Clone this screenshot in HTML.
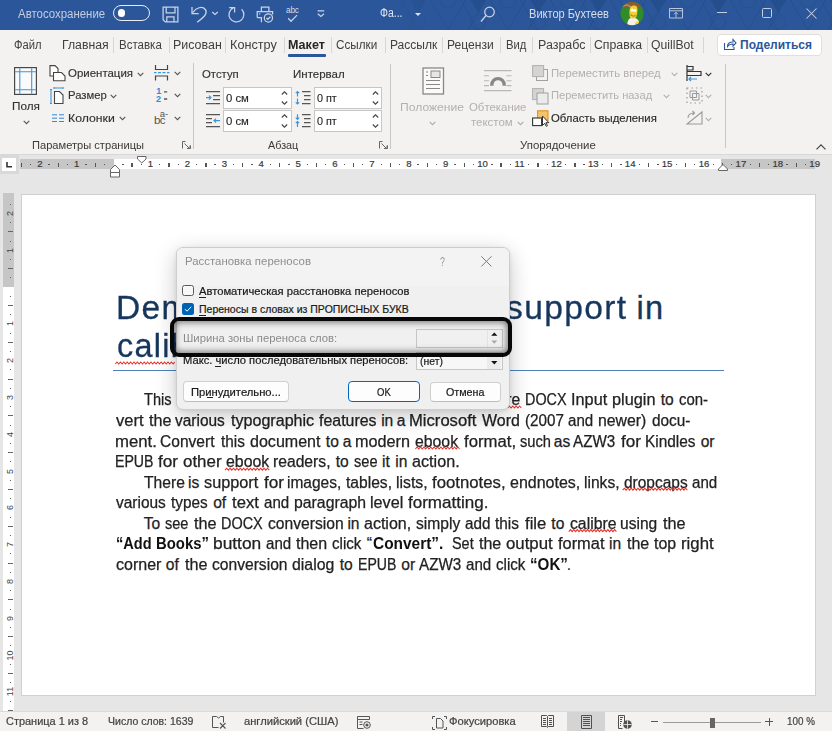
<!DOCTYPE html><html><head><meta charset="utf-8"><style>*{margin:0;padding:0;box-sizing:border-box}
html,body{width:832px;height:731px;overflow:hidden;background:#e6e6e6;position:relative;font-family:"Liberation Sans",sans-serif}
.t{position:absolute;white-space:pre;line-height:1;transform-origin:0 0}
.a{position:absolute}
svg{position:absolute;overflow:visible}
</style></head><body>
<div class="a" style="left:0;top:0;width:832px;height:30px;background:#2b579a"></div>
<div class="a" style="left:0;top:30px;width:832px;height:123.5px;background:#f3f2f1"></div>
<div class="a" style="left:0;top:153.5px;width:832px;height:1.5px;background:#d8d8d8"></div>
<div class="a" style="left:22px;top:195px;width:793px;height:500px;background:#fff;box-shadow:0 0 0 1px #d0d0d0"></div>
<div class="a" style="left:0;top:711px;width:832px;height:20px;background:#f3f2f1;border-top:1px solid #dadada"></div>
<svg style="left:0;top:0" width="832" height="30"><defs><linearGradient id="fg" x1="0" x2="1"><stop offset="0" stop-color="#fff" stop-opacity="0"/><stop offset="0.45" stop-color="#fff" stop-opacity="0"/><stop offset="0.55" stop-color="#fff" stop-opacity="1"/></linearGradient><mask id="fm"><rect width="832" height="30" fill="url(#fg)"/></mask><pattern id="hx" width="60" height="34" patternUnits="userSpaceOnUse" x="8" y="-4"><path d="M0 0L20 34M40 0L20 34M30 0L50 34M60 0L40 34" stroke="#1f4a86" stroke-opacity="0.55" stroke-width="1" fill="none"/><path d="M40 0L60 0L50 17z" fill="#1f4580" fill-opacity="0.45"/><circle cx="20" cy="4" r="8" stroke="#1f4a86" stroke-opacity="0.5" fill="none"/><circle cx="50" cy="26" r="7.5" stroke="#1f4a86" stroke-opacity="0.45" fill="none"/></pattern></defs><rect x="0" y="0" width="832" height="30" fill="url(#hx)" mask="url(#fm)"/></svg>
<div class="t" style="left:18.30px;top:7.54px;font-size:12px;color:#c2cde0;font-weight:400;transform:scaleX(0.9531);">Автосохранение</div>
<div class="a" style="left:113px;top:5px;width:37px;height:15.5px;border:1.5px solid #e8ecf4;border-radius:8px"></div>
<div class="a" style="left:117.8px;top:9.2px;width:7.4px;height:7.4px;border-radius:50%;background:#fff"></div>
<svg style="left:162px;top:6px" width="17" height="17"><path stroke="#c9d3e6" stroke-width="1.25" fill="none" d="M1.1 1.2H15.9V15.9H3.3L1.1 13.7Z M4.2 1.2V6.8H13V1.2 M4.8 15.9V10.8H12V15.9"/></svg>
<svg style="left:185px;top:2px" width="65" height="25"><path stroke="#c9d3e6" stroke-width="1.25" fill="none" d="M7 5.1v6.6h6.7 M8 10.5C11 5.5 17.5 3.8 20.3 7.5 22.5 10.5 21 13.8 12.1 20.2"/><path stroke="#c9d3e6" stroke-width="1.25" fill="none" d="M27.2 10l2.8 2.5 2.8-2.5"/><path stroke="#c9d3e6" stroke-width="1.25" fill="none" d="M56.6 7.3A7.4 7.4 0 1 1 48.2 5.9 M44.2 5.5h5.4v5"/></svg>
<svg style="left:252px;top:2px" width="24" height="25"><path stroke="#c9d3e6" stroke-width="1.25" fill="none" d="M9.4 9.5V5.2h7.5v4.3 M5.2 15.5V9.6h15.4v3 M5.2 15.5h4.2v4.8 M7 11.8h1.2"/><circle stroke="#c9d3e6" stroke-width="1.25" fill="none" cx="16.4" cy="15.9" r="4.1"/><path stroke="#c9d3e6" stroke-width="1.25" fill="none" d="M14.4 15.9l1.4 1.4 2.6-2.6"/></svg>
<div class="t" style="left:286px;top:6.4px;font-size:8.3px;color:#d3dbea;letter-spacing:-0.2px">abc</div>
<svg style="left:286px;top:14px" width="14" height="9"><path stroke="#c9d3e6" stroke-width="1.25" fill="none" d="M2.2 4.3l2.8 3 6-6.2"/></svg>
<svg style="left:317px;top:9px" width="9" height="9"><path stroke="#c9d3e6" stroke-width="1.25" fill="none" d="M.6 1.9h6.6 M.8 4.8l3.1 2.6 3.1-2.6"/></svg>
<div class="t" style="left:379.50px;top:7.14px;font-size:12px;color:#dfe5f0;font-weight:400;transform:scaleX(0.8718);">Фа...</div>
<svg style="left:414.5px;top:13px" width="6" height="3"><path fill="#dfe5f0" d="M0 0h6l-3 3z"/></svg>
<svg style="left:480px;top:6px" width="16" height="17"><circle stroke="#c9d3e6" stroke-width="1.25" fill="none" cx="9.5" cy="6" r="4.8"/><path stroke="#c9d3e6" stroke-width="1.25" fill="none" d="M6 9.5l-5 6"/></svg>
<div class="t" style="left:528.70px;top:8.44px;font-size:12px;color:#d6deec;font-weight:400;transform:scaleX(0.9221);">Виктор Бухтеев</div>
<svg style="left:619.5px;top:2px" width="24" height="24"><defs><clipPath id="av"><circle cx="12" cy="11.6" r="11.6"/></clipPath></defs><g clip-path="url(#av)"><rect width="24" height="24" fill="#2f8c27"/><rect width="24" height="5.6" fill="#8c5b2e"/><path d="M3 4.5C6 2 9 3 11 5.5" stroke="#c98a5a" stroke-width="1.5" fill="none"/><path d="M7.5 24C7 20 8 16.5 12 15.5c4 0 6 2 7 4v4.5z" fill="#f4f2ea"/><path d="M10 15.5C9 12 9.2 6 11 4.5c2-1.5 5-1 6 .5.8 2 .5 7-1 10.5-1.5 1.5-4.5 1.5-6 0z" fill="#f2cf36"/><circle cx="12.2" cy="8.2" r="1.6" fill="#fff"/><circle cx="15" cy="8.6" r="1.4" fill="#fff"/><path d="M10.5 12.5c1.2 1.5 3.5 2 5 1" stroke="#9a7a2a" stroke-width="1.1" fill="none"/><path d="M15 21.5c1-1.5 2.5-2.5 4-2v3.5z" fill="#f2cf36"/></g></svg>
<svg style="left:669px;top:8px" width="15" height="11"><path stroke="#b9c5dc" stroke-width="1" fill="none" d="M.5 .5h13v9.5h-13z M.5 2.8h13 M7 9.5v-5.2 M5 6.3l2-2 2 2"/></svg>
<div class="a" style="left:716.5px;top:12px;width:10.5px;height:1px;background:#c3cde2"></div>
<div class="a" style="left:762px;top:8.3px;width:9.5px;height:9.5px;border:1px solid #c3cde2;border-radius:1.5px"></div>
<svg style="left:806px;top:8px" width="11" height="11"><path stroke="#c3cde2" stroke-width="1.05" d="M.5 .5l10 10 M10.5 .5l-10 10"/></svg>
<div class="t" style="left:13.50px;top:39.44px;font-size:12px;color:#404040;font-weight:400;transform:scaleX(0.9322);">Файл</div>
<div class="t" style="left:61.60px;top:39.44px;font-size:12px;color:#404040;font-weight:400;transform:scaleX(1.0205);">Главная</div>
<div class="t" style="left:118.50px;top:39.44px;font-size:12px;color:#404040;font-weight:400;transform:scaleX(0.9593);">Вставка</div>
<div class="t" style="left:173.40px;top:39.44px;font-size:12px;color:#404040;font-weight:400;transform:scaleX(1.0360);">Рисован</div>
<div class="t" style="left:230.00px;top:39.44px;font-size:12px;color:#404040;font-weight:400;transform:scaleX(1.0558);">Констру</div>
<div class="t" style="left:335.50px;top:39.44px;font-size:12px;color:#404040;font-weight:400;transform:scaleX(0.9749);">Ссылки</div>
<div class="t" style="left:390.00px;top:39.44px;font-size:12px;color:#404040;font-weight:400;transform:scaleX(1.0020);">Рассылк</div>
<div class="t" style="left:447.00px;top:39.44px;font-size:12px;color:#404040;font-weight:400;transform:scaleX(1.0068);">Рецензи</div>
<div class="t" style="left:505.60px;top:39.44px;font-size:12px;color:#404040;font-weight:400;transform:scaleX(0.9398);">Вид</div>
<div class="t" style="left:538.00px;top:39.44px;font-size:12px;color:#404040;font-weight:400;transform:scaleX(1.0387);">Разрабс</div>
<div class="t" style="left:594.00px;top:39.44px;font-size:12px;color:#404040;font-weight:400;transform:scaleX(1.0232);">Справка</div>
<div class="t" style="left:651.00px;top:39.44px;font-size:12px;color:#404040;font-weight:400;transform:scaleX(1.0168);">QuillBot</div>
<div class="t" style="left:288.00px;top:39.44px;font-size:12px;color:#262626;font-weight:700;transform:scaleX(1.0470);">Макет</div>
<div class="a" style="left:287.5px;top:54.3px;width:38.3px;height:2.4px;background:#2b579a;border-radius:1px"></div>
<div class="a" style="left:113.3px;top:37px;width:1px;height:16px;background:#d6d6d6"></div>
<div class="a" style="left:168.5px;top:37px;width:1px;height:16px;background:#d6d6d6"></div>
<div class="a" style="left:225.1px;top:37px;width:1px;height:16px;background:#d6d6d6"></div>
<div class="a" style="left:283.5px;top:37px;width:1px;height:16px;background:#d6d6d6"></div>
<div class="a" style="left:330.5px;top:37px;width:1px;height:16px;background:#d6d6d6"></div>
<div class="a" style="left:385.2px;top:37px;width:1px;height:16px;background:#d6d6d6"></div>
<div class="a" style="left:442.0px;top:37px;width:1px;height:16px;background:#d6d6d6"></div>
<div class="a" style="left:499.5px;top:37px;width:1px;height:16px;background:#d6d6d6"></div>
<div class="a" style="left:531.5px;top:37px;width:1px;height:16px;background:#d6d6d6"></div>
<div class="a" style="left:589.5px;top:37px;width:1px;height:16px;background:#d6d6d6"></div>
<div class="a" style="left:646.5px;top:37px;width:1px;height:16px;background:#d6d6d6"></div>
<div class="a" style="left:703.0px;top:37px;width:1px;height:16px;background:#d6d6d6"></div>
<div class="a" style="left:717px;top:33.5px;width:105px;height:22.5px;background:#fff;border:1px solid #e1dfdd;border-radius:4px"></div>
<svg style="left:723px;top:37px" width="14" height="14"><path stroke="#2b579a" stroke-width="1.1" fill="none" d="M1.5 6v6.5h9.5v-2.5 M4.5 9.5c0-3 2-4.5 5.5-4.5v-2.5l3 3.5-3 3.2v-2.2c-2.5 0-4.3 .8-5.5 2.5z"/></svg>
<div class="t" style="left:740.00px;top:39.14px;font-size:12px;color:#2b579a;font-weight:700;">Поделиться</div>
<svg style="left:13px;top:66px" width="26" height="30"><rect x="1.6" y="1.6" width="21.8" height="26.8" fill="#fafafa" stroke="#484848" stroke-width="1.2"/><path stroke="#3a96dd" stroke-width="1.1" d="M6.8 2.2v25.6 M18.7 2.2v25.6 M2.2 5.7h20.6 M2.2 23.7h20.6"/></svg>
<div class="t" style="left:12.00px;top:100.97px;font-size:11.5px;color:#333231;font-weight:400;transform:scaleX(1.0214);-webkit-text-stroke:0.15px #333">Поля</div>
<svg style="left:22.5px;top:119.8px" width="7" height="5"><path stroke="#555" stroke-width="1.1" fill="none" d="M.7 .8l2.8 2.8 2.8-2.8"/></svg>
<svg style="left:49px;top:65px" width="18" height="17"><path stroke="#444" stroke-width="1.1" fill="#fff" d="M1 .6h5l3 3v7.4h-8z"/><path stroke="#444" stroke-width="1.1" fill="#fff" d="M4.5 7.5h8l3.5 3.5v4.8h-11.5z"/></svg>
<div class="t" style="left:68.40px;top:68.07px;font-size:11.5px;color:#333231;font-weight:400;transform:scaleX(0.9961);-webkit-text-stroke:0.15px #333">Ориентация</div>
<svg style="left:136.5px;top:71.5px" width="7" height="5"><path stroke="#555" stroke-width="1.1" fill="none" d="M.7 .8l2.8 2.8 2.8-2.8"/></svg>
<svg style="left:49.5px;top:86.5px" width="15" height="18"><path stroke="#3a96dd" stroke-width="1.1" fill="none" d="M1 2.5v14 M0 2.5h2 M0 16.5h2 M4 1h9 M4 0v2 M13 0v2"/><path stroke="#444" stroke-width="1.1" fill="#fff" d="M4.5 4.5h5l3.5 3.5v8.5h-8.5z"/></svg>
<div class="t" style="left:68.40px;top:89.97px;font-size:11.5px;color:#333231;font-weight:400;transform:scaleX(0.9813);-webkit-text-stroke:0.15px #333">Размер</div>
<svg style="left:110.3px;top:93.8px" width="7" height="5"><path stroke="#555" stroke-width="1.1" fill="none" d="M.7 .8l2.8 2.8 2.8-2.8"/></svg>
<svg style="left:51.5px;top:113.5px" width="13" height="8"><path stroke="#2f8ad8" stroke-width="1" d="M0 .8h5 M7 .8h5 M0 4.2h5 M7 4.2h5 M0 7.5h5 M7 7.5h5"/></svg>
<div class="t" style="left:68.40px;top:112.57px;font-size:11.5px;color:#333231;font-weight:400;transform:scaleX(1.0654);-webkit-text-stroke:0.15px #333">Колонки</div>
<svg style="left:118.5px;top:115.8px" width="7" height="5"><path stroke="#555" stroke-width="1.1" fill="none" d="M.7 .8l2.8 2.8 2.8-2.8"/></svg>
<svg style="left:153.5px;top:64.5px" width="16" height="16"><path stroke="#444" stroke-width="1.2" fill="none" d="M1.5 0v4.5h12v-4.5 M1.5 15.5v-4.5h12v4.5"/><path stroke="#3a96dd" stroke-width="1.2" d="M0 7.7h2.5 M4 7.7h3 M8.5 7.7h3 M13 7.7h2.5"/></svg>
<svg style="left:173.5px;top:70.8px" width="7" height="5"><path stroke="#555" stroke-width="1.1" fill="none" d="M.7 .8l2.8 2.8 2.8-2.8"/></svg>
<div class="t" style="left:156.3px;top:87.2px;font-size:9px;color:#2f8ad8;font-weight:700">1</div>
<div class="t" style="left:156px;top:95px;font-size:9px;color:#2f8ad8;font-weight:700">2</div>
<svg style="left:163.5px;top:90.5px" width="5" height="9"><path stroke="#555" stroke-width="1.3" d="M0 .8h3.2 M0 8h3.2"/></svg>
<svg style="left:173.5px;top:93.3px" width="7" height="5"><path stroke="#555" stroke-width="1.1" fill="none" d="M.7 .8l2.8 2.8 2.8-2.8"/></svg>
<div class="t" style="left:159.8px;top:109px;font-size:9.5px;color:#555">a-</div>
<div class="t" style="left:154px;top:114.6px;font-size:11.5px;color:#555;letter-spacing:-0.6px">bc</div>
<svg style="left:173.5px;top:115.8px" width="7" height="5"><path stroke="#555" stroke-width="1.1" fill="none" d="M.7 .8l2.8 2.8 2.8-2.8"/></svg>
<div class="t" style="left:31.70px;top:139.69px;font-size:11px;color:#3b3a39;font-weight:400;transform:scaleX(1.0100);">Параметры страницы</div>
<svg style="left:182px;top:141px" width="9" height="8"><path stroke="#666" stroke-width="1" fill="none" d="M.5 7.5v-7h3 M8.5 4.5v3h-3 M2.5 2.5l5 5 M5 7.5h3v-3"/></svg>
<div class="a" style="left:193.3px;top:63px;width:1px;height:86px;background:#c8c6c4"></div>
<div class="t" style="left:202.00px;top:69.07px;font-size:11.5px;color:#333231;font-weight:400;transform:scaleX(0.9870);-webkit-text-stroke:0.15px #333">Отступ</div>
<div class="t" style="left:292.50px;top:69.07px;font-size:11.5px;color:#333231;font-weight:400;transform:scaleX(1.0015);-webkit-text-stroke:0.15px #333">Интервал</div>
<div class="a" style="left:223.3px;top:87px;width:68.6px;height:21.8px;background:#fff;border:1px solid #c8c6c4"></div>
<div class="a" style="left:314px;top:87px;width:68.4px;height:21.8px;background:#fff;border:1px solid #c8c6c4"></div>
<svg style="left:281px;top:91px" width="7" height="14"><path stroke="#444" stroke-width="1.1" fill="none" d="M.8 3.5l2.7-2.7 2.7 2.7 M.8 10.5l2.7 2.7 2.7-2.7"/></svg>
<svg style="left:371.5px;top:91px" width="7" height="14"><path stroke="#444" stroke-width="1.1" fill="none" d="M.8 3.5l2.7-2.7 2.7 2.7 M.8 10.5l2.7 2.7 2.7-2.7"/></svg>
<div class="a" style="left:223.3px;top:110.3px;width:68.6px;height:21.8px;background:#fff;border:1px solid #c8c6c4"></div>
<div class="a" style="left:314px;top:110.3px;width:68.4px;height:21.8px;background:#fff;border:1px solid #c8c6c4"></div>
<svg style="left:281px;top:114.3px" width="7" height="14"><path stroke="#444" stroke-width="1.1" fill="none" d="M.8 3.5l2.7-2.7 2.7 2.7 M.8 10.5l2.7 2.7 2.7-2.7"/></svg>
<svg style="left:371.5px;top:114.3px" width="7" height="14"><path stroke="#444" stroke-width="1.1" fill="none" d="M.8 3.5l2.7-2.7 2.7 2.7 M.8 10.5l2.7 2.7 2.7-2.7"/></svg>
<div class="t" style="left:226.00px;top:92.77px;font-size:11.5px;color:#262626;font-weight:400;transform:scaleX(0.9854);-webkit-text-stroke:0.15px #333">0 см</div>
<div class="t" style="left:226.00px;top:116.07px;font-size:11.5px;color:#262626;font-weight:400;transform:scaleX(0.9854);-webkit-text-stroke:0.15px #333">0 см</div>
<div class="t" style="left:316.50px;top:92.77px;font-size:11.5px;color:#262626;font-weight:400;transform:scaleX(0.9396);-webkit-text-stroke:0.15px #333">0 пт</div>
<div class="t" style="left:316.50px;top:116.07px;font-size:11.5px;color:#262626;font-weight:400;transform:scaleX(0.9396);-webkit-text-stroke:0.15px #333">0 пт</div>
<svg style="left:205.5px;top:90.5px" width="15" height="14"><path stroke="#555" stroke-width="1.1" d="M0 .6h14 M7 4.6h7 M7 8.6h7 M0 12.6h14"/><path stroke="#3a96dd" stroke-width="1.2" fill="none" d="M0 6.6h5 M3 4.6l2 2-2 2"/></svg>
<svg style="left:205.5px;top:113.8px" width="15" height="14"><path stroke="#555" stroke-width="1.1" d="M0 .6h14 M0 4.6h6 M0 8.6h6 M0 12.6h14"/><path stroke="#3a96dd" stroke-width="1.2" fill="none" d="M14 6.6h-6 M10 4.6l-2 2 2 2"/></svg>
<svg style="left:294.5px;top:90.5px" width="17" height="14"><path stroke="#3a96dd" stroke-width="1.2" fill="none" d="M2.5 .5v5 M.8 2.2l1.7-1.7 1.7 1.7 M2.5 7.5v5.5 M.8 11.3l1.7 1.7 1.7-1.7"/><path stroke="#555" stroke-width="1.1" d="M7 .6h8.5 M9 4.6h6.5 M9 8.6h6.5 M7 12.6h8.5"/></svg>
<svg style="left:294.5px;top:113.8px" width="17" height="14"><path stroke="#3a96dd" stroke-width="1.2" fill="none" d="M2.5 .3v5 M.8 3.6l1.7 1.7 1.7-1.7 M2.5 7.5v5.5 M.8 9.2l1.7-1.7 1.7 1.7"/><path stroke="#555" stroke-width="1.1" d="M7 .6h8.5 M9 4.6h6.5 M9 8.6h6.5 M7 12.6h8.5"/></svg>
<div class="t" style="left:268.00px;top:139.69px;font-size:11px;color:#3b3a39;font-weight:400;transform:scaleX(0.9824);">Абзац</div>
<svg style="left:379px;top:141px" width="9" height="8"><path stroke="#666" stroke-width="1" fill="none" d="M.5 7.5v-7h3 M8.5 4.5v3h-3 M2.5 2.5l5 5 M5 7.5h3v-3"/></svg>
<div class="a" style="left:390px;top:63.5px;width:1px;height:85px;background:#c8c6c4"></div>
<svg style="left:421.5px;top:66.8px" width="23" height="28"><rect x="1" y="1" width="20.5" height="26" fill="#fafafa" stroke="#8a8886" stroke-width="1.3"/><rect x="9" y="4" width="9" height="6.5" fill="#e6e6e6" stroke="#8a8886" stroke-width="1"/><path stroke="#8a8886" stroke-width="1" d="M4 5h2 M4 8.5h2 M4 13.5h14 M4 17.5h14 M4 21.5h14"/></svg>
<div class="t" style="left:400.40px;top:101.87px;font-size:11.5px;color:#b3b0ad;font-weight:400;transform:scaleX(1.0534);">Положение</div>
<svg style="left:429px;top:121.3px" width="7" height="5"><path stroke="#aaa" stroke-width="1.1" fill="none" d="M.7 .8l2.8 2.8 2.8-2.8"/></svg>
<svg style="left:484px;top:69.5px" width="28" height="22"><path stroke="#b8b8b8" stroke-width="1.1" d="M0 .6h27.5 M0 5.8h5 M22.5 5.8h5 M0 10.8h5 M22.5 10.8h5 M0 15.6h5 M22.5 15.6h5 M0 20.6h27.5"/><path stroke="#8a8886" stroke-width="3.4" fill="none" d="M7.8 15.8v-1a6.2 6.2 0 0 1 12.4 0v1"/></svg>
<div class="t" style="left:469.00px;top:101.87px;font-size:11.5px;color:#b3b0ad;font-weight:400;transform:scaleX(0.9910);">Обтекание</div>
<div class="t" style="left:471.00px;top:117.07px;font-size:11.5px;color:#b3b0ad;font-weight:400;transform:scaleX(0.9958);">текстом</div>
<svg style="left:516.5px;top:121.3px" width="7" height="5"><path stroke="#aaa" stroke-width="1.1" fill="none" d="M.7 .8l2.8 2.8 2.8-2.8"/></svg>
<svg style="left:531.5px;top:64.5px" width="17" height="17"><rect x="4.5" y="4.5" width="11" height="11" fill="#f3f2f1" stroke="#a0a0a0" stroke-width="1"/><rect x="0.6" y="0.6" width="11" height="11" fill="#d4d4d4" stroke="#b0b0b0" stroke-width="1"/></svg>
<svg style="left:531.5px;top:87.5px" width="17" height="17"><rect x="0.6" y="0.6" width="11" height="11" fill="#d4d4d4" stroke="#b0b0b0" stroke-width="1"/><rect x="5" y="5" width="11" height="11" fill="#ebebeb" stroke="#a0a0a0" stroke-width="1"/></svg>
<div class="t" style="left:550.60px;top:68.17px;font-size:11.5px;color:#b3b0ad;font-weight:400;transform:scaleX(0.9819);">Переместить вперед</div>
<div class="t" style="left:550.60px;top:90.27px;font-size:11.5px;color:#b3b0ad;font-weight:400;transform:scaleX(0.9663);">Переместить назад</div>
<svg style="left:670.5px;top:71.5px" width="7" height="5"><path stroke="#b0b0b0" stroke-width="1.1" fill="none" d="M.7 .8l2.8 2.8 2.8-2.8"/></svg>
<svg style="left:663px;top:94px" width="7" height="5"><path stroke="#b0b0b0" stroke-width="1.1" fill="none" d="M.7 .8l2.8 2.8 2.8-2.8"/></svg>
<svg style="left:531.5px;top:109.5px" width="17" height="17"><rect x="5.6" y="0.8" width="10.4" height="9.4" fill="#f6c36a" stroke="#e3901f" stroke-width="1.1"/><rect x="0.6" y="8" width="9" height="7.6" fill="#fff" stroke="#333" stroke-width="1.1"/><path fill="#fff" stroke="#333" stroke-width="1" d="M10.5 6v9.5l2.2-2.2 1.6 3 1.2-.6-1.6-3h3z"/></svg>
<div class="t" style="left:550.60px;top:113.07px;font-size:11.5px;color:#262626;font-weight:400;transform:scaleX(0.9841);-webkit-text-stroke:0.15px #333">Область выделения</div>
<div class="t" style="left:519.60px;top:139.59px;font-size:11px;color:#3b3a39;font-weight:400;transform:scaleX(1.0387);">Упорядочение</div>
<svg style="left:685.5px;top:64.5px" width="17" height="17"><path stroke="#333" stroke-width="1.2" fill="none" d="M1 0v16 M1 1.5h6v3.5h-6 M1 6.5h14v4h-14"/><path stroke="#3a96dd" stroke-width="1.2" fill="none" d="M3 14h8 M5 12l-2 2 2 2"/></svg>
<svg style="left:705.3px;top:71.5px" width="7" height="5"><path stroke="#333" stroke-width="1.1" fill="none" d="M.7 .8l2.8 2.8 2.8-2.8"/></svg>
<svg style="left:685.5px;top:87px" width="17" height="17"><path stroke="#9a9a9a" stroke-width="1" fill="none" d="M4 4h6.5v6.5h-6.5z M6.5 6.5h6.5v6.5h-6.5z"/><path stroke="#9a9a9a" stroke-width="1.2" stroke-dasharray="1.5 3" fill="none" d="M1 1h15v15h-15z"/></svg>
<svg style="left:705.3px;top:94px" width="7" height="5"><path stroke="#b0b0b0" stroke-width="1.1" fill="none" d="M.7 .8l2.8 2.8 2.8-2.8"/></svg>
<svg style="left:685.5px;top:110px" width="17" height="15"><path stroke="#9a9a9a" stroke-width="1.1" fill="none" d="M1 14h15v-12z M2 8c0-3 2-5 6-5 M6.5 1l2 2-2 2"/></svg>
<svg style="left:705.3px;top:116.5px" width="7" height="5"><path stroke="#b0b0b0" stroke-width="1.1" fill="none" d="M.7 .8l2.8 2.8 2.8-2.8"/></svg>
<div class="a" style="left:725px;top:63.5px;width:1px;height:84px;background:#c8c6c4"></div>
<svg style="left:815.5px;top:144px" width="10" height="6"><path stroke="#444" stroke-width="1.2" fill="none" d="M.5 5.3l4.5-4.5 4.5 4.5"/></svg>
<div class="a" style="left:0;top:154.5px;width:19px;height:19px;background:#d9d9d9"></div>
<div class="a" style="left:1.5px;top:157.5px;width:14.5px;height:13.5px;background:#fff"></div>
<svg style="left:6px;top:162px" width="7" height="6"><path stroke="#333" stroke-width="1.6" fill="none" d="M1 0v4.8h5"/></svg>
<div class="a" style="left:20px;top:159px;width:795px;height:9.8px;background:#c6c6c6"></div>
<div class="a" style="left:113.5px;top:159px;width:607.5px;height:9.8px;background:#fff"></div>
<div class="a" style="left:20.75px;top:162.6px;width:1.3px;height:4.6px;background:#555"></div>
<div class="a" style="left:29.98px;top:163.9px;width:1.3px;height:1.3px;background:#555"></div>
<div class="t" style="left:29.80px;top:159.3px;width:20px;text-align:center;font-size:9.6px;color:#3a3a3a;-webkit-text-stroke:0.2px #3a3a3a">2</div>
<div class="a" style="left:48.42px;top:163.9px;width:1.3px;height:1.3px;background:#555"></div>
<div class="a" style="left:57.65px;top:162.6px;width:1.3px;height:4.6px;background:#555"></div>
<div class="a" style="left:66.88px;top:163.9px;width:1.3px;height:1.3px;background:#555"></div>
<div class="t" style="left:66.70px;top:159.3px;width:20px;text-align:center;font-size:9.6px;color:#3a3a3a;-webkit-text-stroke:0.2px #3a3a3a">1</div>
<div class="a" style="left:85.33px;top:163.9px;width:1.3px;height:1.3px;background:#555"></div>
<div class="a" style="left:94.55px;top:162.6px;width:1.3px;height:4.6px;background:#555"></div>
<div class="a" style="left:103.78px;top:163.9px;width:1.3px;height:1.3px;background:#555"></div>
<div class="a" style="left:122.22px;top:163.9px;width:1.3px;height:1.3px;background:#555"></div>
<div class="a" style="left:131.45px;top:162.6px;width:1.3px;height:4.6px;background:#555"></div>
<div class="a" style="left:140.67px;top:163.9px;width:1.3px;height:1.3px;background:#555"></div>
<div class="t" style="left:140.50px;top:159.3px;width:20px;text-align:center;font-size:9.6px;color:#3a3a3a;-webkit-text-stroke:0.2px #3a3a3a">1</div>
<div class="a" style="left:159.12px;top:163.9px;width:1.3px;height:1.3px;background:#555"></div>
<div class="a" style="left:168.35px;top:162.6px;width:1.3px;height:4.6px;background:#555"></div>
<div class="a" style="left:177.58px;top:163.9px;width:1.3px;height:1.3px;background:#555"></div>
<div class="t" style="left:177.40px;top:159.3px;width:20px;text-align:center;font-size:9.6px;color:#3a3a3a;-webkit-text-stroke:0.2px #3a3a3a">2</div>
<div class="a" style="left:196.03px;top:163.9px;width:1.3px;height:1.3px;background:#555"></div>
<div class="a" style="left:205.25px;top:162.6px;width:1.3px;height:4.6px;background:#555"></div>
<div class="a" style="left:214.47px;top:163.9px;width:1.3px;height:1.3px;background:#555"></div>
<div class="t" style="left:214.30px;top:159.3px;width:20px;text-align:center;font-size:9.6px;color:#3a3a3a;-webkit-text-stroke:0.2px #3a3a3a">3</div>
<div class="a" style="left:232.92px;top:163.9px;width:1.3px;height:1.3px;background:#555"></div>
<div class="a" style="left:242.15px;top:162.6px;width:1.3px;height:4.6px;background:#555"></div>
<div class="a" style="left:251.38px;top:163.9px;width:1.3px;height:1.3px;background:#555"></div>
<div class="t" style="left:251.20px;top:159.3px;width:20px;text-align:center;font-size:9.6px;color:#3a3a3a;-webkit-text-stroke:0.2px #3a3a3a">4</div>
<div class="a" style="left:269.82px;top:163.9px;width:1.3px;height:1.3px;background:#555"></div>
<div class="a" style="left:279.05px;top:162.6px;width:1.3px;height:4.6px;background:#555"></div>
<div class="a" style="left:288.27px;top:163.9px;width:1.3px;height:1.3px;background:#555"></div>
<div class="t" style="left:288.10px;top:159.3px;width:20px;text-align:center;font-size:9.6px;color:#3a3a3a;-webkit-text-stroke:0.2px #3a3a3a">5</div>
<div class="a" style="left:306.72px;top:163.9px;width:1.3px;height:1.3px;background:#555"></div>
<div class="a" style="left:315.95px;top:162.6px;width:1.3px;height:4.6px;background:#555"></div>
<div class="a" style="left:325.17px;top:163.9px;width:1.3px;height:1.3px;background:#555"></div>
<div class="t" style="left:325.00px;top:159.3px;width:20px;text-align:center;font-size:9.6px;color:#3a3a3a;-webkit-text-stroke:0.2px #3a3a3a">6</div>
<div class="a" style="left:343.62px;top:163.9px;width:1.3px;height:1.3px;background:#555"></div>
<div class="a" style="left:352.85px;top:162.6px;width:1.3px;height:4.6px;background:#555"></div>
<div class="a" style="left:362.07px;top:163.9px;width:1.3px;height:1.3px;background:#555"></div>
<div class="t" style="left:361.90px;top:159.3px;width:20px;text-align:center;font-size:9.6px;color:#3a3a3a;-webkit-text-stroke:0.2px #3a3a3a">7</div>
<div class="a" style="left:380.52px;top:163.9px;width:1.3px;height:1.3px;background:#555"></div>
<div class="a" style="left:389.75px;top:162.6px;width:1.3px;height:4.6px;background:#555"></div>
<div class="a" style="left:398.97px;top:163.9px;width:1.3px;height:1.3px;background:#555"></div>
<div class="t" style="left:398.80px;top:159.3px;width:20px;text-align:center;font-size:9.6px;color:#3a3a3a;-webkit-text-stroke:0.2px #3a3a3a">8</div>
<div class="a" style="left:417.42px;top:163.9px;width:1.3px;height:1.3px;background:#555"></div>
<div class="a" style="left:426.65px;top:162.6px;width:1.3px;height:4.6px;background:#555"></div>
<div class="a" style="left:435.88px;top:163.9px;width:1.3px;height:1.3px;background:#555"></div>
<div class="t" style="left:435.70px;top:159.3px;width:20px;text-align:center;font-size:9.6px;color:#3a3a3a;-webkit-text-stroke:0.2px #3a3a3a">9</div>
<div class="a" style="left:454.32px;top:163.9px;width:1.3px;height:1.3px;background:#555"></div>
<div class="a" style="left:463.55px;top:162.6px;width:1.3px;height:4.6px;background:#555"></div>
<div class="a" style="left:472.77px;top:163.9px;width:1.3px;height:1.3px;background:#555"></div>
<div class="t" style="left:472.60px;top:159.3px;width:20px;text-align:center;font-size:9.6px;color:#3a3a3a;-webkit-text-stroke:0.2px #3a3a3a">10</div>
<div class="a" style="left:491.22px;top:163.9px;width:1.3px;height:1.3px;background:#555"></div>
<div class="a" style="left:500.45px;top:162.6px;width:1.3px;height:4.6px;background:#555"></div>
<div class="a" style="left:509.67px;top:163.9px;width:1.3px;height:1.3px;background:#555"></div>
<div class="t" style="left:509.50px;top:159.3px;width:20px;text-align:center;font-size:9.6px;color:#3a3a3a;-webkit-text-stroke:0.2px #3a3a3a">11</div>
<div class="a" style="left:528.12px;top:163.9px;width:1.3px;height:1.3px;background:#555"></div>
<div class="a" style="left:537.35px;top:162.6px;width:1.3px;height:4.6px;background:#555"></div>
<div class="a" style="left:546.57px;top:163.9px;width:1.3px;height:1.3px;background:#555"></div>
<div class="t" style="left:546.40px;top:159.3px;width:20px;text-align:center;font-size:9.6px;color:#3a3a3a;-webkit-text-stroke:0.2px #3a3a3a">12</div>
<div class="a" style="left:565.02px;top:163.9px;width:1.3px;height:1.3px;background:#555"></div>
<div class="a" style="left:574.25px;top:162.6px;width:1.3px;height:4.6px;background:#555"></div>
<div class="a" style="left:583.47px;top:163.9px;width:1.3px;height:1.3px;background:#555"></div>
<div class="t" style="left:583.30px;top:159.3px;width:20px;text-align:center;font-size:9.6px;color:#3a3a3a;-webkit-text-stroke:0.2px #3a3a3a">13</div>
<div class="a" style="left:601.92px;top:163.9px;width:1.3px;height:1.3px;background:#555"></div>
<div class="a" style="left:611.15px;top:162.6px;width:1.3px;height:4.6px;background:#555"></div>
<div class="a" style="left:620.38px;top:163.9px;width:1.3px;height:1.3px;background:#555"></div>
<div class="t" style="left:620.20px;top:159.3px;width:20px;text-align:center;font-size:9.6px;color:#3a3a3a;-webkit-text-stroke:0.2px #3a3a3a">14</div>
<div class="a" style="left:638.82px;top:163.9px;width:1.3px;height:1.3px;background:#555"></div>
<div class="a" style="left:648.05px;top:162.6px;width:1.3px;height:4.6px;background:#555"></div>
<div class="a" style="left:657.27px;top:163.9px;width:1.3px;height:1.3px;background:#555"></div>
<div class="t" style="left:657.10px;top:159.3px;width:20px;text-align:center;font-size:9.6px;color:#3a3a3a;-webkit-text-stroke:0.2px #3a3a3a">15</div>
<div class="a" style="left:675.73px;top:163.9px;width:1.3px;height:1.3px;background:#555"></div>
<div class="a" style="left:684.95px;top:162.6px;width:1.3px;height:4.6px;background:#555"></div>
<div class="a" style="left:694.17px;top:163.9px;width:1.3px;height:1.3px;background:#555"></div>
<div class="t" style="left:694.00px;top:159.3px;width:20px;text-align:center;font-size:9.6px;color:#3a3a3a;-webkit-text-stroke:0.2px #3a3a3a">16</div>
<div class="a" style="left:712.62px;top:163.9px;width:1.3px;height:1.3px;background:#555"></div>
<div class="a" style="left:721.85px;top:162.6px;width:1.3px;height:4.6px;background:#555"></div>
<div class="a" style="left:731.07px;top:163.9px;width:1.3px;height:1.3px;background:#555"></div>
<div class="t" style="left:730.90px;top:159.3px;width:20px;text-align:center;font-size:9.6px;color:#3a3a3a;-webkit-text-stroke:0.2px #3a3a3a">17</div>
<div class="a" style="left:749.52px;top:163.9px;width:1.3px;height:1.3px;background:#555"></div>
<div class="a" style="left:758.75px;top:162.6px;width:1.3px;height:4.6px;background:#555"></div>
<div class="a" style="left:767.98px;top:163.9px;width:1.3px;height:1.3px;background:#555"></div>
<div class="t" style="left:767.80px;top:159.3px;width:20px;text-align:center;font-size:9.6px;color:#3a3a3a;-webkit-text-stroke:0.2px #3a3a3a">18</div>
<div class="a" style="left:786.42px;top:163.9px;width:1.3px;height:1.3px;background:#555"></div>
<div class="a" style="left:795.65px;top:162.6px;width:1.3px;height:4.6px;background:#555"></div>
<div class="a" style="left:804.88px;top:163.9px;width:1.3px;height:1.3px;background:#555"></div>
<div class="t" style="left:804.70px;top:159.3px;width:20px;text-align:center;font-size:9.6px;color:#3a3a3a;-webkit-text-stroke:0.2px #3a3a3a">19</div>
<svg style="left:110px;top:163.5px" width="10" height="14"><path fill="#fff" stroke="#666" stroke-width="1" d="M.5 5.5l4.5-4.5 4.5 4.5v3h-9z M.5 8.5h9v4.5h-9z"/></svg>
<svg style="left:137.3px;top:156.2px" width="10" height="8"><path fill="#fff" stroke="#666" stroke-width="1" d="M.5 .5h8.5v2.5l-4.25 4-4.25-4z"/></svg>
<svg style="left:717.5px;top:163.5px" width="10" height="8"><path fill="#fff" stroke="#666" stroke-width="1" d="M.5 6.5v-1.5l4.5-4.5 4.5 4.5v1.5z"/></svg>
<div class="a" style="left:3px;top:193px;width:11px;height:518px;background:#fff"></div>
<div class="a" style="left:3px;top:193px;width:11px;height:94px;background:#c6c6c6"></div>
<div class="a" style="left:9.9px;top:203.70px;width:1.1px;height:1.1px;background:#666"></div>
<div class="t" style="left:-0.5px;top:208.90px;width:20px;height:9px;text-align:center;font-size:9px;color:#444;transform:rotate(-90deg);transform-origin:50% 50%">2</div>
<div class="a" style="left:9.9px;top:222.10px;width:1.1px;height:1.1px;background:#666"></div>
<div class="a" style="left:8.2px;top:231.30px;width:4.5px;height:1px;background:#666"></div>
<div class="a" style="left:9.9px;top:240.50px;width:1.1px;height:1.1px;background:#666"></div>
<div class="t" style="left:-0.5px;top:245.70px;width:20px;height:9px;text-align:center;font-size:9px;color:#444;transform:rotate(-90deg);transform-origin:50% 50%">1</div>
<div class="a" style="left:9.9px;top:258.90px;width:1.1px;height:1.1px;background:#666"></div>
<div class="a" style="left:8.2px;top:268.10px;width:4.5px;height:1px;background:#666"></div>
<div class="a" style="left:9.9px;top:277.30px;width:1.1px;height:1.1px;background:#666"></div>
<div class="a" style="left:9.9px;top:295.70px;width:1.1px;height:1.1px;background:#666"></div>
<div class="a" style="left:8.2px;top:304.90px;width:4.5px;height:1px;background:#666"></div>
<div class="a" style="left:9.9px;top:314.10px;width:1.1px;height:1.1px;background:#666"></div>
<div class="t" style="left:-0.5px;top:319.30px;width:20px;height:9px;text-align:center;font-size:9px;color:#444;transform:rotate(-90deg);transform-origin:50% 50%">1</div>
<div class="a" style="left:9.9px;top:332.50px;width:1.1px;height:1.1px;background:#666"></div>
<div class="a" style="left:8.2px;top:341.70px;width:4.5px;height:1px;background:#666"></div>
<div class="a" style="left:9.9px;top:350.90px;width:1.1px;height:1.1px;background:#666"></div>
<div class="t" style="left:-0.5px;top:356.10px;width:20px;height:9px;text-align:center;font-size:9px;color:#444;transform:rotate(-90deg);transform-origin:50% 50%">2</div>
<div class="a" style="left:9.9px;top:369.30px;width:1.1px;height:1.1px;background:#666"></div>
<div class="a" style="left:8.2px;top:378.50px;width:4.5px;height:1px;background:#666"></div>
<div class="a" style="left:9.9px;top:387.70px;width:1.1px;height:1.1px;background:#666"></div>
<div class="t" style="left:-0.5px;top:392.90px;width:20px;height:9px;text-align:center;font-size:9px;color:#444;transform:rotate(-90deg);transform-origin:50% 50%">3</div>
<div class="a" style="left:9.9px;top:406.10px;width:1.1px;height:1.1px;background:#666"></div>
<div class="a" style="left:8.2px;top:415.30px;width:4.5px;height:1px;background:#666"></div>
<div class="a" style="left:9.9px;top:424.50px;width:1.1px;height:1.1px;background:#666"></div>
<div class="t" style="left:-0.5px;top:429.70px;width:20px;height:9px;text-align:center;font-size:9px;color:#444;transform:rotate(-90deg);transform-origin:50% 50%">4</div>
<div class="a" style="left:9.9px;top:442.90px;width:1.1px;height:1.1px;background:#666"></div>
<div class="a" style="left:8.2px;top:452.10px;width:4.5px;height:1px;background:#666"></div>
<div class="a" style="left:9.9px;top:461.30px;width:1.1px;height:1.1px;background:#666"></div>
<div class="t" style="left:-0.5px;top:466.50px;width:20px;height:9px;text-align:center;font-size:9px;color:#444;transform:rotate(-90deg);transform-origin:50% 50%">5</div>
<div class="a" style="left:9.9px;top:479.70px;width:1.1px;height:1.1px;background:#666"></div>
<div class="a" style="left:8.2px;top:488.90px;width:4.5px;height:1px;background:#666"></div>
<div class="a" style="left:9.9px;top:498.10px;width:1.1px;height:1.1px;background:#666"></div>
<div class="t" style="left:-0.5px;top:503.30px;width:20px;height:9px;text-align:center;font-size:9px;color:#444;transform:rotate(-90deg);transform-origin:50% 50%">6</div>
<div class="a" style="left:9.9px;top:516.50px;width:1.1px;height:1.1px;background:#666"></div>
<div class="a" style="left:8.2px;top:525.70px;width:4.5px;height:1px;background:#666"></div>
<div class="a" style="left:9.9px;top:534.90px;width:1.1px;height:1.1px;background:#666"></div>
<div class="t" style="left:-0.5px;top:540.10px;width:20px;height:9px;text-align:center;font-size:9px;color:#444;transform:rotate(-90deg);transform-origin:50% 50%">7</div>
<div class="a" style="left:9.9px;top:553.30px;width:1.1px;height:1.1px;background:#666"></div>
<div class="a" style="left:8.2px;top:562.50px;width:4.5px;height:1px;background:#666"></div>
<div class="a" style="left:9.9px;top:571.70px;width:1.1px;height:1.1px;background:#666"></div>
<div class="t" style="left:-0.5px;top:576.90px;width:20px;height:9px;text-align:center;font-size:9px;color:#444;transform:rotate(-90deg);transform-origin:50% 50%">8</div>
<div class="a" style="left:9.9px;top:590.10px;width:1.1px;height:1.1px;background:#666"></div>
<div class="a" style="left:8.2px;top:599.30px;width:4.5px;height:1px;background:#666"></div>
<div class="a" style="left:9.9px;top:608.50px;width:1.1px;height:1.1px;background:#666"></div>
<div class="t" style="left:-0.5px;top:613.70px;width:20px;height:9px;text-align:center;font-size:9px;color:#444;transform:rotate(-90deg);transform-origin:50% 50%">9</div>
<div class="a" style="left:9.9px;top:626.90px;width:1.1px;height:1.1px;background:#666"></div>
<div class="a" style="left:8.2px;top:636.10px;width:4.5px;height:1px;background:#666"></div>
<div class="a" style="left:9.9px;top:645.30px;width:1.1px;height:1.1px;background:#666"></div>
<div class="t" style="left:-0.5px;top:650.50px;width:20px;height:9px;text-align:center;font-size:9px;color:#444;transform:rotate(-90deg);transform-origin:50% 50%">10</div>
<div class="a" style="left:9.9px;top:663.70px;width:1.1px;height:1.1px;background:#666"></div>
<div class="a" style="left:8.2px;top:672.90px;width:4.5px;height:1px;background:#666"></div>
<div class="a" style="left:9.9px;top:682.10px;width:1.1px;height:1.1px;background:#666"></div>
<div class="t" style="left:-0.5px;top:687.30px;width:20px;height:9px;text-align:center;font-size:9px;color:#444;transform:rotate(-90deg);transform-origin:50% 50%">11</div>
<div class="a" style="left:9.9px;top:700.50px;width:1.1px;height:1.1px;background:#666"></div>
<div class="a" style="left:8.2px;top:709.70px;width:4.5px;height:1px;background:#666"></div>
<div class="t" style="left:115.94px;top:291.70px;font-size:32.6px;color:#17365d;font-weight:400;transform:scaleX(1.0285);letter-spacing:1.30px;-webkit-text-stroke:0.3px #17365d">Demonstration</div>
<div class="t" style="left:362.06px;top:291.70px;font-size:32.6px;color:#17365d;font-weight:400;letter-spacing:1.30px;-webkit-text-stroke:0.3px #17365d">of</div>
<div class="t" style="left:403.40px;top:291.70px;font-size:32.6px;color:#17365d;font-weight:400;transform:scaleX(0.9160);letter-spacing:1.30px;-webkit-text-stroke:0.3px #17365d">DOCX</div>
<div class="t" style="left:505.70px;top:291.70px;font-size:32.6px;color:#17365d;font-weight:400;transform:scaleX(1.0308);letter-spacing:1.30px;-webkit-text-stroke:0.3px #17365d">support</div>
<div class="t" style="left:636.58px;top:291.70px;font-size:32.6px;color:#17365d;font-weight:400;letter-spacing:1.30px;-webkit-text-stroke:0.3px #17365d">in</div>
<div class="t" style="left:117.01px;top:330.00px;font-size:32.6px;color:#17365d;font-weight:400;transform:scaleX(0.9937);letter-spacing:1.30px;-webkit-text-stroke:0.3px #17365d">calibre</div>
<div class="a" style="left:113.2px;top:370px;width:611px;height:1px;background:#4f81bd"></div>
<div class="t" style="left:144.40px;top:392.39px;font-size:15.6px;color:#222;font-weight:400;transform:scaleX(0.9323);-webkit-text-stroke:0.25px #222">This</div>
<div class="t" style="left:176.97px;top:392.39px;font-size:15.6px;color:#222;font-weight:400;transform:scaleX(1.0276);-webkit-text-stroke:0.25px #222">document</div>
<div class="t" style="left:252.62px;top:392.39px;font-size:15.6px;color:#222;font-weight:400;transform:scaleX(1.0237);-webkit-text-stroke:0.25px #222">demonstrates</div>
<div class="t" style="left:354.93px;top:392.39px;font-size:15.6px;color:#222;font-weight:400;transform:scaleX(1.0353);-webkit-text-stroke:0.25px #222">the</div>
<div class="t" style="left:381.72px;top:392.39px;font-size:15.6px;color:#222;font-weight:400;transform:scaleX(1.0474);-webkit-text-stroke:0.25px #222">ability</div>
<div class="t" style="left:428.69px;top:392.39px;font-size:15.6px;color:#222;font-weight:400;-webkit-text-stroke:0.25px #222">of</div>
<div class="t" style="left:447.51px;top:392.39px;font-size:15.6px;color:#222;font-weight:400;transform:scaleX(1.0353);-webkit-text-stroke:0.25px #222">the</div>
<div class="t" style="left:474.46px;top:392.39px;font-size:15.6px;color:#222;font-weight:400;transform:scaleX(1.0046);-webkit-text-stroke:0.25px #222">calibre</div>
<div class="t" style="left:524.68px;top:392.39px;font-size:15.6px;color:#222;font-weight:400;transform:scaleX(0.9216);-webkit-text-stroke:0.25px #222">DOCX</div>
<div class="t" style="left:570.97px;top:392.39px;font-size:15.6px;color:#222;font-weight:400;transform:scaleX(1.0443);-webkit-text-stroke:0.25px #222">Input</div>
<div class="t" style="left:611.91px;top:392.39px;font-size:15.6px;color:#222;font-weight:400;transform:scaleX(1.0448);-webkit-text-stroke:0.25px #222">plugin</div>
<div class="t" style="left:660.68px;top:392.39px;font-size:15.6px;color:#222;font-weight:400;-webkit-text-stroke:0.25px #222">to</div>
<div class="t" style="left:679.12px;top:392.39px;font-size:15.6px;color:#222;font-weight:400;transform:scaleX(0.9582);-webkit-text-stroke:0.25px #222">con-</div>
<div class="t" style="left:115.60px;top:412.96px;font-size:15.6px;color:#222;font-weight:400;transform:scaleX(1.0574);-webkit-text-stroke:0.25px #222">vert</div>
<div class="t" style="left:148.87px;top:412.96px;font-size:15.6px;color:#222;font-weight:400;transform:scaleX(1.0395);-webkit-text-stroke:0.25px #222">the</div>
<div class="t" style="left:175.30px;top:412.96px;font-size:15.6px;color:#222;font-weight:400;transform:scaleX(0.9906);-webkit-text-stroke:0.25px #222">various</div>
<div class="t" style="left:230.71px;top:412.96px;font-size:15.6px;color:#222;font-weight:400;transform:scaleX(1.0311);-webkit-text-stroke:0.25px #222">typographic</div>
<div class="t" style="left:319.15px;top:412.96px;font-size:15.6px;color:#222;font-weight:400;transform:scaleX(1.0211);-webkit-text-stroke:0.25px #222">features</div>
<div class="t" style="left:381.15px;top:412.96px;font-size:15.6px;color:#222;font-weight:400;-webkit-text-stroke:0.25px #222">in</div>
<div class="t" style="left:396.79px;top:412.96px;font-size:15.6px;color:#222;font-weight:400;-webkit-text-stroke:0.25px #222">a</div>
<div class="t" style="left:409.26px;top:412.96px;font-size:15.6px;color:#222;font-weight:400;transform:scaleX(1.0657);-webkit-text-stroke:0.25px #222">Microsoft</div>
<div class="t" style="left:481.67px;top:412.96px;font-size:15.6px;color:#222;font-weight:400;transform:scaleX(1.0226);-webkit-text-stroke:0.25px #222">Word</div>
<div class="t" style="left:524.85px;top:412.96px;font-size:15.6px;color:#222;font-weight:400;transform:scaleX(0.9765);-webkit-text-stroke:0.25px #222">(2007</div>
<div class="t" style="left:568.39px;top:412.96px;font-size:15.6px;color:#222;font-weight:400;transform:scaleX(0.9680);-webkit-text-stroke:0.25px #222">and</div>
<div class="t" style="left:597.97px;top:412.96px;font-size:15.6px;color:#222;font-weight:400;transform:scaleX(1.0147);-webkit-text-stroke:0.25px #222">newer)</div>
<div class="t" style="left:651.73px;top:412.96px;font-size:15.6px;color:#222;font-weight:400;transform:scaleX(0.9861);-webkit-text-stroke:0.25px #222">docu-</div>
<div class="t" style="left:114.53px;top:433.53px;font-size:15.6px;color:#222;font-weight:400;transform:scaleX(1.0735);-webkit-text-stroke:0.25px #222">ment.</div>
<div class="t" style="left:160.39px;top:433.53px;font-size:15.6px;color:#222;font-weight:400;transform:scaleX(0.9975);-webkit-text-stroke:0.25px #222">Convert</div>
<div class="t" style="left:220.59px;top:433.53px;font-size:15.6px;color:#222;font-weight:400;transform:scaleX(0.9821);-webkit-text-stroke:0.25px #222">this</div>
<div class="t" style="left:249.55px;top:433.53px;font-size:15.6px;color:#222;font-weight:400;transform:scaleX(1.0292);-webkit-text-stroke:0.25px #222">document</div>
<div class="t" style="left:325.82px;top:433.53px;font-size:15.6px;color:#222;font-weight:400;-webkit-text-stroke:0.25px #222">to</div>
<div class="t" style="left:342.77px;top:433.53px;font-size:15.6px;color:#222;font-weight:400;-webkit-text-stroke:0.25px #222">a</div>
<div class="t" style="left:355.40px;top:433.53px;font-size:15.6px;color:#222;font-weight:400;transform:scaleX(1.0402);-webkit-text-stroke:0.25px #222">modern</div>
<div class="t" style="left:415.21px;top:433.53px;font-size:15.6px;color:#222;font-weight:400;transform:scaleX(1.0127);-webkit-text-stroke:0.25px #222">ebook</div>
<div class="t" style="left:463.54px;top:433.53px;font-size:15.6px;color:#222;font-weight:400;transform:scaleX(1.0725);-webkit-text-stroke:0.25px #222">format,</div>
<div class="t" style="left:519.59px;top:433.53px;font-size:15.6px;color:#222;font-weight:400;transform:scaleX(0.9414);-webkit-text-stroke:0.25px #222">such</div>
<div class="t" style="left:553.85px;top:433.53px;font-size:15.6px;color:#222;font-weight:400;-webkit-text-stroke:0.25px #222">as</div>
<div class="t" style="left:573.36px;top:433.53px;font-size:15.6px;color:#222;font-weight:400;transform:scaleX(0.9736);-webkit-text-stroke:0.25px #222">AZW3</div>
<div class="t" style="left:620.91px;top:433.53px;font-size:15.6px;color:#222;font-weight:400;transform:scaleX(1.0970);-webkit-text-stroke:0.25px #222">for</div>
<div class="t" style="left:644.68px;top:433.53px;font-size:15.6px;color:#222;font-weight:400;transform:scaleX(0.9884);-webkit-text-stroke:0.25px #222">Kindles</div>
<div class="t" style="left:700.64px;top:433.53px;font-size:15.6px;color:#222;font-weight:400;-webkit-text-stroke:0.25px #222">or</div>
<div class="t" style="left:114.69px;top:454.10px;font-size:15.6px;color:#222;font-weight:400;transform:scaleX(0.9068);-webkit-text-stroke:0.25px #222">EPUB</div>
<div class="t" style="left:158.44px;top:454.10px;font-size:15.6px;color:#222;font-weight:400;transform:scaleX(1.1035);-webkit-text-stroke:0.25px #222">for</div>
<div class="t" style="left:182.87px;top:454.10px;font-size:15.6px;color:#222;font-weight:400;transform:scaleX(1.0843);-webkit-text-stroke:0.25px #222">other</div>
<div class="t" style="left:225.76px;top:454.10px;font-size:15.6px;color:#222;font-weight:400;transform:scaleX(1.0187);-webkit-text-stroke:0.25px #222">ebook</div>
<div class="t" style="left:273.37px;top:454.10px;font-size:15.6px;color:#222;font-weight:400;transform:scaleX(1.0052);-webkit-text-stroke:0.25px #222">readers,</div>
<div class="t" style="left:335.70px;top:454.10px;font-size:15.6px;color:#222;font-weight:400;-webkit-text-stroke:0.25px #222">to</div>
<div class="t" style="left:354.07px;top:454.10px;font-size:15.6px;color:#222;font-weight:400;transform:scaleX(0.9356);-webkit-text-stroke:0.25px #222">see</div>
<div class="t" style="left:382.09px;top:454.10px;font-size:15.6px;color:#222;font-weight:400;-webkit-text-stroke:0.25px #222">it</div>
<div class="t" style="left:395.23px;top:454.10px;font-size:15.6px;color:#222;font-weight:400;-webkit-text-stroke:0.25px #222">in</div>
<div class="t" style="left:412.26px;top:454.10px;font-size:15.6px;color:#222;font-weight:400;transform:scaleX(1.0366);-webkit-text-stroke:0.25px #222">action.</div>
<div class="t" style="left:144.00px;top:474.67px;font-size:15.6px;color:#222;font-weight:400;transform:scaleX(1.0039);-webkit-text-stroke:0.25px #222">There</div>
<div class="t" style="left:187.97px;top:474.67px;font-size:15.6px;color:#222;font-weight:400;-webkit-text-stroke:0.25px #222">is</div>
<div class="t" style="left:203.59px;top:474.67px;font-size:15.6px;color:#222;font-weight:400;transform:scaleX(1.0428);-webkit-text-stroke:0.25px #222">support</div>
<div class="t" style="left:263.62px;top:474.67px;font-size:15.6px;color:#222;font-weight:400;transform:scaleX(1.1007);-webkit-text-stroke:0.25px #222">for</div>
<div class="t" style="left:287.14px;top:474.67px;font-size:15.6px;color:#222;font-weight:400;transform:scaleX(0.9942);-webkit-text-stroke:0.25px #222">images,</div>
<div class="t" style="left:346.19px;top:474.67px;font-size:15.6px;color:#222;font-weight:400;transform:scaleX(1.0010);-webkit-text-stroke:0.25px #222">tables,</div>
<div class="t" style="left:395.91px;top:474.67px;font-size:15.6px;color:#222;font-weight:400;transform:scaleX(1.0157);-webkit-text-stroke:0.25px #222">lists,</div>
<div class="t" style="left:432.31px;top:474.67px;font-size:15.6px;color:#222;font-weight:400;transform:scaleX(1.0736);-webkit-text-stroke:0.25px #222">footnotes,</div>
<div class="t" style="left:510.01px;top:474.67px;font-size:15.6px;color:#222;font-weight:400;transform:scaleX(1.0253);-webkit-text-stroke:0.25px #222">endnotes,</div>
<div class="t" style="left:583.96px;top:474.67px;font-size:15.6px;color:#222;font-weight:400;transform:scaleX(1.0013);-webkit-text-stroke:0.25px #222">links,</div>
<div class="t" style="left:623.80px;top:474.67px;font-size:15.6px;color:#222;font-weight:400;transform:scaleX(0.9923);-webkit-text-stroke:0.25px #222">dropcaps</div>
<div class="t" style="left:692.45px;top:474.67px;font-size:15.6px;color:#222;font-weight:400;transform:scaleX(0.9688);-webkit-text-stroke:0.25px #222">and</div>
<div class="t" style="left:115.60px;top:495.24px;font-size:15.6px;color:#222;font-weight:400;transform:scaleX(0.9905);-webkit-text-stroke:0.25px #222">various</div>
<div class="t" style="left:171.00px;top:495.24px;font-size:15.6px;color:#222;font-weight:400;transform:scaleX(0.9821);-webkit-text-stroke:0.25px #222">types</div>
<div class="t" style="left:213.20px;top:495.24px;font-size:15.6px;color:#222;font-weight:400;-webkit-text-stroke:0.25px #222">of</div>
<div class="t" style="left:232.06px;top:495.24px;font-size:15.6px;color:#222;font-weight:400;transform:scaleX(1.0687);-webkit-text-stroke:0.25px #222">text</div>
<div class="t" style="left:264.09px;top:495.24px;font-size:15.6px;color:#222;font-weight:400;transform:scaleX(0.9678);-webkit-text-stroke:0.25px #222">and</div>
<div class="t" style="left:293.66px;top:495.24px;font-size:15.6px;color:#222;font-weight:400;transform:scaleX(1.0141);-webkit-text-stroke:0.25px #222">paragraph</div>
<div class="t" style="left:370.03px;top:495.24px;font-size:15.6px;color:#222;font-weight:400;transform:scaleX(1.0370);-webkit-text-stroke:0.25px #222">level</div>
<div class="t" style="left:408.03px;top:495.24px;font-size:15.6px;color:#222;font-weight:400;transform:scaleX(1.0917);-webkit-text-stroke:0.25px #222">formatting.</div>
<div class="t" style="left:143.80px;top:515.81px;font-size:15.6px;color:#222;font-weight:400;-webkit-text-stroke:0.25px #222">To</div>
<div class="t" style="left:165.35px;top:515.81px;font-size:15.6px;color:#222;font-weight:400;transform:scaleX(0.9332);-webkit-text-stroke:0.25px #222">see</div>
<div class="t" style="left:193.89px;top:515.81px;font-size:15.6px;color:#222;font-weight:400;transform:scaleX(1.0405);-webkit-text-stroke:0.25px #222">the</div>
<div class="t" style="left:220.52px;top:515.81px;font-size:15.6px;color:#222;font-weight:400;transform:scaleX(0.9263);-webkit-text-stroke:0.25px #222">DOCX</div>
<div class="t" style="left:267.62px;top:515.81px;font-size:15.6px;color:#222;font-weight:400;transform:scaleX(1.0026);-webkit-text-stroke:0.25px #222">conversion</div>
<div class="t" style="left:347.40px;top:515.81px;font-size:15.6px;color:#222;font-weight:400;-webkit-text-stroke:0.25px #222">in</div>
<div class="t" style="left:364.39px;top:515.81px;font-size:15.6px;color:#222;font-weight:400;transform:scaleX(1.0269);-webkit-text-stroke:0.25px #222">action,</div>
<div class="t" style="left:415.66px;top:515.81px;font-size:15.6px;color:#222;font-weight:400;transform:scaleX(1.0019);-webkit-text-stroke:0.25px #222">simply</div>
<div class="t" style="left:464.56px;top:515.81px;font-size:15.6px;color:#222;font-weight:400;transform:scaleX(0.9776);-webkit-text-stroke:0.25px #222">add</div>
<div class="t" style="left:495.41px;top:515.81px;font-size:15.6px;color:#222;font-weight:400;transform:scaleX(0.9855);-webkit-text-stroke:0.25px #222">this</div>
<div class="t" style="left:524.94px;top:515.81px;font-size:15.6px;color:#222;font-weight:400;transform:scaleX(1.0708);-webkit-text-stroke:0.25px #222">file</div>
<div class="t" style="left:551.32px;top:515.81px;font-size:15.6px;color:#222;font-weight:400;-webkit-text-stroke:0.25px #222">to</div>
<div class="t" style="left:569.82px;top:515.81px;font-size:15.6px;color:#222;font-weight:400;transform:scaleX(1.0097);-webkit-text-stroke:0.25px #222">calibre</div>
<div class="t" style="left:620.07px;top:515.81px;font-size:15.6px;color:#222;font-weight:400;transform:scaleX(0.9975);-webkit-text-stroke:0.25px #222">using</div>
<div class="t" style="left:662.64px;top:515.81px;font-size:15.6px;color:#222;font-weight:400;transform:scaleX(1.0405);-webkit-text-stroke:0.25px #222">the</div>
<div class="t" style="left:115.57px;top:536.38px;font-size:15.6px;color:#111;font-weight:700;transform:scaleX(0.9331);">“Add</div>
<div class="t" style="left:155.82px;top:536.38px;font-size:15.6px;color:#111;font-weight:700;transform:scaleX(0.9547);">Books”</div>
<div class="t" style="left:212.89px;top:536.38px;font-size:15.6px;color:#222;font-weight:400;transform:scaleX(1.1129);-webkit-text-stroke:0.25px #222">button</div>
<div class="t" style="left:265.74px;top:536.38px;font-size:15.6px;color:#222;font-weight:400;transform:scaleX(0.9664);-webkit-text-stroke:0.25px #222">and</div>
<div class="t" style="left:296.29px;top:536.38px;font-size:15.6px;color:#222;font-weight:400;transform:scaleX(1.0275);-webkit-text-stroke:0.25px #222">then</div>
<div class="t" style="left:332.29px;top:536.38px;font-size:15.6px;color:#222;font-weight:400;transform:scaleX(0.9676);-webkit-text-stroke:0.25px #222">click</div>
<div class="t" style="left:366.64px;top:536.38px;font-size:15.6px;color:#222;font-weight:400;-webkit-text-stroke:0.25px #222">“</div>
<div class="t" style="left:373.00px;top:536.38px;font-size:15.6px;color:#111;font-weight:700;transform:scaleX(0.9899);">Convert”.</div>
<div class="t" style="left:451.70px;top:536.38px;font-size:15.6px;color:#222;font-weight:400;transform:scaleX(0.9244);-webkit-text-stroke:0.25px #222">Set</div>
<div class="t" style="left:478.98px;top:536.38px;font-size:15.6px;color:#222;font-weight:400;transform:scaleX(1.0282);-webkit-text-stroke:0.25px #222">the</div>
<div class="t" style="left:505.74px;top:536.38px;font-size:15.6px;color:#222;font-weight:400;transform:scaleX(1.0758);-webkit-text-stroke:0.25px #222">output</div>
<div class="t" style="left:558.12px;top:536.38px;font-size:15.6px;color:#222;font-weight:400;transform:scaleX(1.0509);-webkit-text-stroke:0.25px #222">format</div>
<div class="t" style="left:609.08px;top:536.38px;font-size:15.6px;color:#222;font-weight:400;-webkit-text-stroke:0.25px #222">in</div>
<div class="t" style="left:626.57px;top:536.38px;font-size:15.6px;color:#222;font-weight:400;transform:scaleX(1.0282);-webkit-text-stroke:0.25px #222">the</div>
<div class="t" style="left:653.80px;top:536.38px;font-size:15.6px;color:#222;font-weight:400;transform:scaleX(1.0183);-webkit-text-stroke:0.25px #222">top</div>
<div class="t" style="left:680.65px;top:536.38px;font-size:15.6px;color:#222;font-weight:400;transform:scaleX(1.0756);-webkit-text-stroke:0.25px #222">right</div>
<div class="t" style="left:115.60px;top:556.95px;font-size:15.6px;color:#222;font-weight:400;transform:scaleX(1.0280);-webkit-text-stroke:0.25px #222">corner</div>
<div class="t" style="left:165.84px;top:556.95px;font-size:15.6px;color:#222;font-weight:400;-webkit-text-stroke:0.25px #222">of</div>
<div class="t" style="left:184.70px;top:556.95px;font-size:15.6px;color:#222;font-weight:400;transform:scaleX(1.0390);-webkit-text-stroke:0.25px #222">the</div>
<div class="t" style="left:211.74px;top:556.95px;font-size:15.6px;color:#222;font-weight:400;transform:scaleX(1.0011);-webkit-text-stroke:0.25px #222">conversion</div>
<div class="t" style="left:292.08px;top:556.95px;font-size:15.6px;color:#222;font-weight:400;transform:scaleX(1.0163);-webkit-text-stroke:0.25px #222">dialog</div>
<div class="t" style="left:339.79px;top:556.95px;font-size:15.6px;color:#222;font-weight:400;-webkit-text-stroke:0.25px #222">to</div>
<div class="t" style="left:357.85px;top:556.95px;font-size:15.6px;color:#222;font-weight:400;transform:scaleX(0.9032);-webkit-text-stroke:0.25px #222">EPUB</div>
<div class="t" style="left:401.24px;top:556.95px;font-size:15.6px;color:#222;font-weight:400;-webkit-text-stroke:0.25px #222">or</div>
<div class="t" style="left:419.13px;top:556.95px;font-size:15.6px;color:#222;font-weight:400;transform:scaleX(0.9754);-webkit-text-stroke:0.25px #222">AZW3</div>
<div class="t" style="left:466.13px;top:556.95px;font-size:15.6px;color:#222;font-weight:400;transform:scaleX(0.9674);-webkit-text-stroke:0.25px #222">and</div>
<div class="t" style="left:496.23px;top:556.95px;font-size:15.6px;color:#222;font-weight:400;transform:scaleX(0.9687);-webkit-text-stroke:0.25px #222">click</div>
<div class="t" style="left:529.83px;top:556.95px;font-size:15.6px;color:#111;font-weight:700;transform:scaleX(0.9734);">“OK”</div>
<div class="t" style="left:566.75px;top:556.95px;font-size:15.6px;color:#222;font-weight:400;">.</div>
<svg style="left:0;top:0" width="832" height="731"><path stroke="#e8322a" stroke-width="1.05" fill="none" d="M115.3 364.0 l1.7 -2 l1.7 2 l1.7 -2 l1.7 2 l1.7 -2 l1.7 2 l1.7 -2 l1.7 2 l1.7 -2 l1.7 2 l1.7 -2 l1.7 2 l1.7 -2 l1.7 2 l1.7 -2 l1.7 2 l1.7 -2 l1.7 2 l1.7 -2 l1.7 2 l1.7 -2 l1.7 2 l1.7 -2 l1.7 2 l1.7 -2 l1.7 2 l1.7 -2 l1.7 2 l1.7 -2 l1.7 2 l1.7 -2 l1.7 2 l1.7 -2 l1.7 2 l1.7 -2"/></svg>
<svg style="left:0;top:0" width="832" height="731"><path stroke="#e8322a" stroke-width="1.05" fill="none" d="M507.7 408.0 l1.7 -2 l1.7 2 l1.7 -2 l1.7 2 l1.7 -2 l1.7 2 l1.7 -2 l1.7 2"/></svg>
<svg style="left:0;top:0" width="832" height="731"><path stroke="#e8322a" stroke-width="1.05" fill="none" d="M415.4 449.0 l1.7 -2 l1.7 2 l1.7 -2 l1.7 2 l1.7 -2 l1.7 2 l1.7 -2 l1.7 2 l1.7 -2 l1.7 2 l1.7 -2 l1.7 2 l1.7 -2 l1.7 2 l1.7 -2 l1.7 2 l1.7 -2 l1.7 2 l1.7 -2 l1.7 2 l1.7 -2 l1.7 2 l1.7 -2 l1.7 2 l1.7 -2 l1.7 2"/></svg>
<svg style="left:0;top:0" width="832" height="731"><path stroke="#e8322a" stroke-width="1.05" fill="none" d="M225.0 470.2 l1.7 -2 l1.7 2 l1.7 -2 l1.7 2 l1.7 -2 l1.7 2 l1.7 -2 l1.7 2 l1.7 -2 l1.7 2 l1.7 -2 l1.7 2 l1.7 -2 l1.7 2 l1.7 -2 l1.7 2 l1.7 -2 l1.7 2 l1.7 -2 l1.7 2 l1.7 -2 l1.7 2 l1.7 -2 l1.7 2 l1.7 -2 l1.7 2"/></svg>
<svg style="left:0;top:0" width="832" height="731"><path stroke="#e8322a" stroke-width="1.05" fill="none" d="M622.7 490.2 l1.7 -2 l1.7 2 l1.7 -2 l1.7 2 l1.7 -2 l1.7 2 l1.7 -2 l1.7 2 l1.7 -2 l1.7 2 l1.7 -2 l1.7 2 l1.7 -2 l1.7 2 l1.7 -2 l1.7 2 l1.7 -2 l1.7 2 l1.7 -2 l1.7 2 l1.7 -2 l1.7 2 l1.7 -2 l1.7 2 l1.7 -2 l1.7 2 l1.7 -2 l1.7 2 l1.7 -2 l1.7 2 l1.7 -2 l1.7 2 l1.7 -2 l1.7 2 l1.7 -2 l1.7 2 l1.7 -2 l1.7 2"/></svg>
<svg style="left:0;top:0" width="832" height="731"><path stroke="#e8322a" stroke-width="1.05" fill="none" d="M568.8 531.6 l1.7 -2 l1.7 2 l1.7 -2 l1.7 2 l1.7 -2 l1.7 2 l1.7 -2 l1.7 2 l1.7 -2 l1.7 2 l1.7 -2 l1.7 2 l1.7 -2 l1.7 2 l1.7 -2 l1.7 2 l1.7 -2 l1.7 2 l1.7 -2 l1.7 2 l1.7 -2 l1.7 2 l1.7 -2 l1.7 2 l1.7 -2 l1.7 2 l1.7 -2 l1.7 2"/></svg>
<div class="a" style="left:175.7px;top:247.2px;width:334.5px;height:162.5px;background:#f0f0f0;border:1px solid #cdcdcd;border-radius:7px;box-shadow:0 6px 22px rgba(0,0,0,0.22),0 1px 4px rgba(0,0,0,0.08);overflow:hidden"><div class="a" style="left:0;top:0;width:100%;height:38px;background:#f3f3f3"></div></div>
<div class="t" style="left:184.70px;top:256.29px;font-size:11px;color:#8e8e8e;font-weight:400;transform:scaleX(1.0368);">Расстановка переносов</div>
<div class="t" style="left:440.00px;top:255.84px;font-size:12px;color:#9a9a9a;font-weight:400;transform:scaleX(0.7429);">?</div>
<svg style="left:481px;top:256px" width="11" height="11"><path stroke="#7a7a7a" stroke-width="1" d="M.3 .3l10.2 10.2 M10.5 .3l-10.2 10.2"/></svg>
<div class="a" style="left:182.3px;top:284.8px;width:12.2px;height:11.7px;border:1px solid #5a5a5a;border-radius:2.5px;background:#f7f7f7"></div>
<div class="a" style="left:182.3px;top:303px;width:12.2px;height:12px;border-radius:2.5px;background:#0063b1"></div>
<svg style="left:182.3px;top:303px" width="12" height="12"><path stroke="#fff" stroke-width="1" fill="none" d="M3 6.2l2 2 4.2-4.4"/></svg>
<div class="t" style="left:199.00px;top:286.11px;font-size:10.5px;color:#1a1a1a;font-weight:400;transform:scaleX(1.0669);-webkit-text-stroke:0.2px #1a1a1a">Автоматическая расстановка переносов</div>
<div class="a" style="left:199px;top:296.6px;width:7px;height:1px;background:#222"></div>
<div class="t" style="left:199.00px;top:304.11px;font-size:10.5px;color:#1a1a1a;font-weight:400;-webkit-text-stroke:0.2px #1a1a1a">Переносы в словах из ПРОПИСНЫХ БУКВ</div>
<div class="a" style="left:199px;top:314.6px;width:7px;height:1px;background:#222"></div>
<div class="t" style="left:182.80px;top:332.81px;font-size:10.5px;color:#8a8a8a;font-weight:400;transform:scaleX(1.0765);">Ширина зоны переноса слов:</div>
<div class="a" style="left:416.3px;top:328.8px;width:86.4px;height:19px;background:#f0f0f0;border:1px solid #c6c6c6"></div>
<div class="a" style="left:486.6px;top:330px;width:1px;height:17px;background:#e3e3e3"></div>
<svg style="left:490.5px;top:331.5px" width="7" height="13"><path fill="#111" d="M.2 3.8l3.1-3.3 3.1 3.3z"/><path fill="#a9a9a9" d="M.2 8.5h6.2l-3.1 3.3z"/></svg>
<div class="t" style="left:182.80px;top:355.11px;font-size:10.5px;color:#1a1a1a;font-weight:400;transform:scaleX(1.0648);-webkit-text-stroke:0.2px #1a1a1a">Макс. число последовательных переносов:</div>
<div class="a" style="left:214.5px;top:366px;width:6px;height:1px;background:#222"></div>
<div class="a" style="left:416.3px;top:351.9px;width:86.4px;height:18.3px;background:#f7f7f7;border:1px solid #c6c6c6"></div>
<div class="a" style="left:486.6px;top:353px;width:14px;height:16px;background:#ececec"></div>
<svg style="left:490.5px;top:360.8px" width="7" height="5"><path fill="#111" d="M.2 0h6.2l-3.1 3.4z"/></svg>
<div class="t" style="left:419.60px;top:356.11px;font-size:10.5px;color:#1a1a1a;font-weight:400;transform:scaleX(0.9914);-webkit-text-stroke:0.2px #1a1a1a">(нет)</div>
<div class="a" style="left:170.2px;top:316.7px;width:341.5px;height:40.3px;border:4px solid #080808;border-radius:9px;box-shadow:inset 0 0 6px 1.5px rgba(0,0,0,0.5)"></div>
<div class="a" style="left:182.5px;top:381px;width:106.2px;height:21.3px;background:#fdfdfd;border:1px solid #d0d0d0;border-bottom-color:#bdbdbd;border-radius:4px"></div>
<div class="t" style="left:191.00px;top:386.61px;font-size:10.5px;color:#1a1a1a;font-weight:400;transform:scaleX(1.0698);-webkit-text-stroke:0.2px #1a1a1a">Принудительно...</div>
<div class="a" style="left:206.5px;top:397.3px;width:6px;height:1px;background:#222"></div>
<div class="a" style="left:348.2px;top:381px;width:71.4px;height:21.3px;background:#fdfdfd;border:1.6px solid #0067c0;border-radius:4px"></div>
<div class="t" style="left:376.50px;top:387.11px;font-size:10.5px;color:#1a1a1a;font-weight:400;transform:scaleX(0.9033);-webkit-text-stroke:0.2px #1a1a1a">OK</div>
<div class="a" style="left:430px;top:381.5px;width:71.2px;height:20.7px;background:#fdfdfd;border:1px solid #d0d0d0;border-bottom-color:#bdbdbd;border-radius:4px"></div>
<div class="t" style="left:446.00px;top:386.91px;font-size:10.5px;color:#1a1a1a;font-weight:400;transform:scaleX(1.0203);-webkit-text-stroke:0.2px #1a1a1a">Отмена</div>
<div class="t" style="left:6.00px;top:716.93px;font-size:10px;color:#444;font-weight:400;transform:scaleX(1.0943);-webkit-text-stroke:0.2px #444">Страница 1 из 8</div>
<div class="t" style="left:107.70px;top:716.93px;font-size:10px;color:#444;font-weight:400;transform:scaleX(1.0515);-webkit-text-stroke:0.2px #444">Число слов: 1639</div>
<svg style="left:212px;top:715.5px" width="15" height="13"><path stroke="#555" stroke-width="1" fill="none" d="M.5 .5h4l2 1.5 2-1.5h3v6 M.5 .5v11h6"/><path stroke="#555" stroke-width="1.1" d="M8 7l5.5 5.5 M13.5 7l-5.5 5.5"/></svg>
<div class="t" style="left:243.60px;top:716.93px;font-size:10px;color:#444;font-weight:400;transform:scaleX(1.1160);-webkit-text-stroke:0.2px #444">английский (США)</div>
<svg style="left:356.5px;top:715.5px" width="14" height="13"><path stroke="#555" stroke-width="1" fill="none" d="M.5 .5h12v3h-12z M.5 3.5v9h6 M2.5 6h3 M2.5 8.5h3"/><circle cx="10" cy="9" r="3.3" fill="none" stroke="#555" stroke-width="1"/><circle cx="10" cy="9" r="1.6" fill="#555"/></svg>
<svg style="left:432px;top:715.5px" width="15" height="14"><path stroke="#555" stroke-width="1" fill="none" d="M.5 3v-2.5h2.5 M12 .5h2.5v2.5 M14.5 11v2.5h-2.5 M3 13.5h-2.5v-2.5 M4.5 2.5h4l2.5 2.5v7h-6.5z"/></svg>
<div class="t" style="left:448.60px;top:716.93px;font-size:10px;color:#444;font-weight:400;transform:scaleX(1.1171);-webkit-text-stroke:0.2px #444">Фокусировка</div>
<div class="a" style="left:566.8px;top:712px;width:38.2px;height:19px;background:#d4d4d4"></div>
<svg style="left:0;top:0" width="832" height="731"><g stroke="#505050" stroke-width="1" fill="none"><path d="M541.5 715.5h5l1 1 1-1h5v11h-5l-1 1-1-1h-5z M547.5 716.5v10"/><path d="M543 718.5h3 M543 720.5h3 M543 722.5h3 M543 724.5h3 M549 718.5h3 M549 720.5h3 M549 722.5h3 M549 724.5h3"/><path d="M581.5 715.5h10v13h-10z M583 717.5h7 M583 719.5h7 M583 721.5h7 M583 723.5h7 M583 725.5h7"/><path d="M624.5 722.5v-7h-6v13h4 M620 717.5h3 M620 719.5h2 M620 721.5h2 M620 723.5h1 M620 725.5h1"/></g><circle cx="627.5" cy="724.5" r="4.3" fill="#505050"/><path stroke="#f3f2f1" stroke-width="0.8" d="M623.3 724.5h8.4 M627.5 720.3v8.4"/></svg>
<div class="a" style="left:650.8px;top:721.3px;width:7.3px;height:1.2px;background:#555"></div>
<div class="a" style="left:663.3px;top:721.8px;width:97.3px;height:1px;background:#9a9a9a"></div>
<div class="a" style="left:710px;top:717.5px;width:5px;height:10.3px;background:#666"></div>
<div class="a" style="left:765.4px;top:721.3px;width:7.9px;height:1.2px;background:#555"></div>
<div class="a" style="left:768.75px;top:718px;width:1.2px;height:7.9px;background:#555"></div>
<div class="t" style="left:787.00px;top:716.93px;font-size:10px;color:#444;font-weight:400;transform:scaleX(0.9837);-webkit-text-stroke:0.2px #444">100 %</div>
</body></html>
